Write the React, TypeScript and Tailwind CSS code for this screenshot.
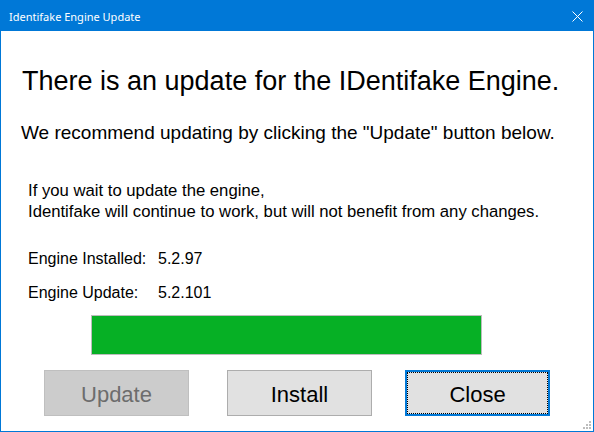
import React from "react";

export default function App() {
  return (
    <div className="relative w-[594px] h-[432px] bg-white border border-[#0078d7] flex flex-col overflow-hidden" style={{ fontFamily: '"Liberation Sans", Arial, sans-serif' }}>
      {/* Title bar */}
      <div className="h-[30px] bg-[#0078d7] flex items-center justify-between pl-[8px] pr-[9px] shrink-0">
        <span className="text-white text-[11px] leading-none" style={{ fontFamily: '"Noto Sans", "Open Sans", sans-serif' }}>
          Identifake Engine Update
        </span>
        <svg width="11" height="11" viewBox="0 0 11 11" className="mr-[1px]">
          <path d="M0.5 0.5 L10.5 10.5 M10.5 0.5 L0.5 10.5" stroke="white" strokeWidth="1" fill="none" />
        </svg>
      </div>

      {/* Content */}
      <div className="flex flex-col text-black">
        <div className="mt-[35px] pl-[21px] text-[27px] leading-[30px] whitespace-nowrap">
          There is an update for the IDentifake Engine.
        </div>
        <div className="mt-[26px] pl-[20px] text-[19px] leading-[22px] whitespace-nowrap">
          We recommend updating by clicking the "Update" button below.
        </div>
        <div className="mt-[36px] pl-[27px] text-[16.7px] leading-[21px] whitespace-nowrap">
          <div>If you wait to update the engine,</div>
          <div>Identifake will continue to work, but will not benefit from any changes.</div>
        </div>
        <div className="mt-[26px] pl-[27px] text-[16px] leading-[21px] grid grid-cols-[130px_1fr] gap-y-[13px]">
          <div>Engine Installed:</div>
          <div>5.2.97</div>
          <div>Engine Update:</div>
          <div>5.2.101</div>
        </div>
        <div className="mt-[12px] ml-[90px] w-[391px] h-[40px] border border-[#bcbcbc] bg-[#e6e6e6]">
          <div className="h-full bg-[#06b025]" style={{ width: "100%" }} />
        </div>
        <div className="mt-[15px] ml-[43px] flex gap-[38px] text-[22px]">
          <div className="w-[145px] h-[46px] pt-[3px] bg-[#cccccc] border border-[#bfbfbf] text-[#6d6d6d] flex items-center justify-center">
            Update
          </div>
          <div className="w-[145px] h-[46px] pt-[3px] bg-[#e1e1e1] border border-[#adadad] flex items-center justify-center">
            Install
          </div>
          <div className="relative w-[145px] h-[46px] pt-[3px] bg-[#e1e1e1] border-2 border-[#0078d7] flex items-center justify-center -ml-[5px]">
            <span className="absolute inset-0 border border-dotted border-black" />
            Close
          </div>
        </div>
      </div>

      {/* Size grip */}
      <svg className="absolute right-[1px] bottom-[1px]" width="10" height="10" viewBox="0 0 10 10">
        <rect x="7" y="1" width="2" height="2" fill="#bdbdbd" />
        <rect x="4" y="4" width="2" height="2" fill="#bdbdbd" />
        <rect x="7" y="4" width="2" height="2" fill="#bdbdbd" />
        <rect x="1" y="7" width="2" height="2" fill="#bdbdbd" />
        <rect x="4" y="7" width="2" height="2" fill="#bdbdbd" />
        <rect x="7" y="7" width="2" height="2" fill="#bdbdbd" />
      </svg>
    </div>
  );
}
